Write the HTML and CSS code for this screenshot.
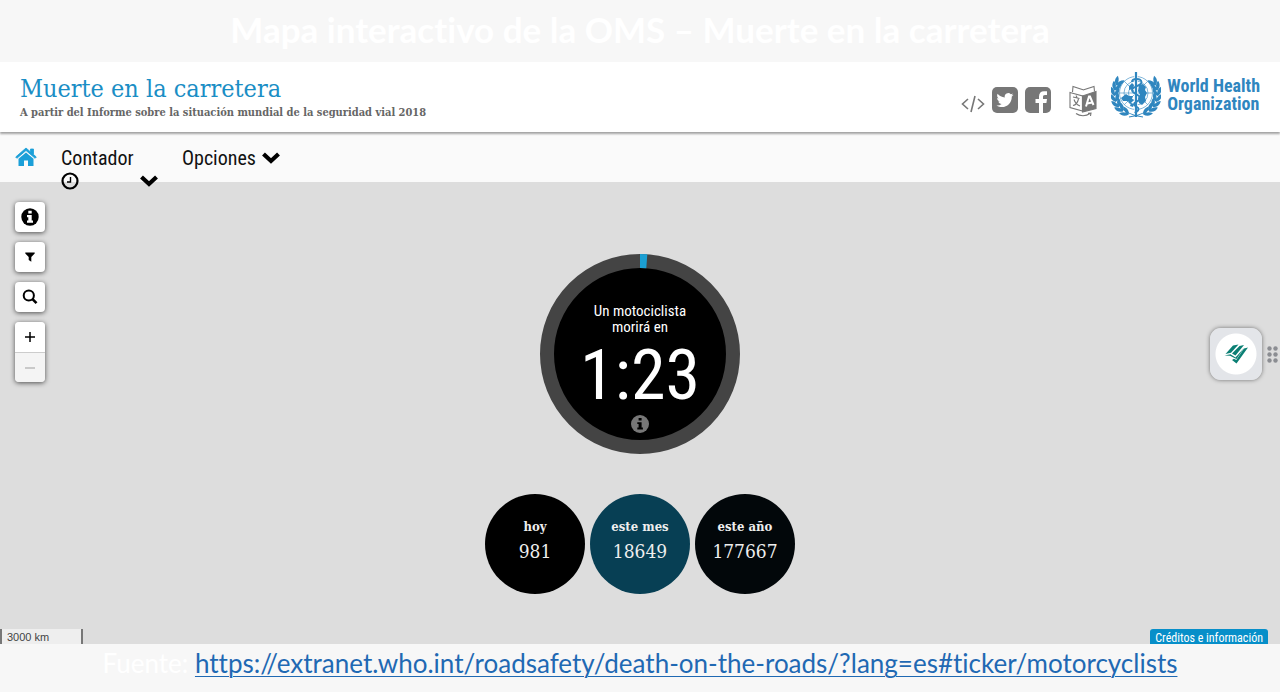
FILE: index.html
```
<!DOCTYPE html>
<html lang="es">
<head>
<meta charset="utf-8">
<title>Mapa interactivo de la OMS – Muerte en la carretera</title>
<link rel="stylesheet" href="styles.css">
</head>
<body>
  <h1 class="slide-title">Mapa interactivo de la OMS – Muerte en la carretera</h1>

  <header class="header">
    <div class="brand">
      <h2>Muerte en la carretera</h2>
      <p>A partir del Informe sobre la situación mundial de la seguridad vial 2018</p>
    </div>
    <div class="share">
      <a href="#embed" aria-label="Insertar">
        <svg width="24" height="20" viewBox="0 0 24 20" fill="none" stroke="#777" stroke-width="1.6"><path d="M7 5 1.500 10 7 15M17 5l5.500 5L17 15M14 2l-4 16"/></svg>
      </a>
      <a href="#twitter" aria-label="Twitter">
        <svg width="26" height="26" viewBox="0 0 26 26"><rect width="26" height="26" rx="5" fill="#777"/><path fill="#fff" d="M21.500 7.700c-.7.300-1.300.5-2 .6.700-.4 1.200-1.100 1.500-1.900-.7.400-1.400.7-2.200.8a3.500 3.500 0 0 0-6 3.200c-2.900-.1-5.500-1.500-7.200-3.600-.9 1.600-.5 3.600 1.100 4.600-.6 0-1.100-.2-1.600-.4 0 1.700 1.200 3.100 2.800 3.400-.5.200-1 .2-1.600.1.500 1.400 1.700 2.400 3.300 2.400A7 7 0 0 1 4.500 18.400c6.500 4.100 15.300.4 15.300-8.900.7-.5 1.300-1.100 1.700-1.800z"/></svg>
      </a>
      <a href="#facebook" aria-label="Facebook">
        <svg width="26" height="26" viewBox="0 0 26 26"><rect width="26" height="26" rx="5" fill="#777"/><path fill="#fff" d="M14 26V16h-3.500v-4H14V9.500C14 6 16 4.200 19 4.200h3V8h-2c-1.500 0-2 .7-2 1.900V12h4l-.6 4H18v10z"/></svg>
      </a>
      <a class="lang" href="#lang" aria-label="Idioma">
        <svg width="28" height="32" viewBox="0 0 28 32" fill="none" stroke="#777" stroke-width="1.100"><path d="M1 7.500 13.500 11v15L1 22.500zM3.500 7 4 1.500l10 3.300M14 5l11-3.500.5 5"/><path fill="#777" d="M13.500 11 27 6.500v17L13.500 27z"/><path d="m4 12 6.500 1.500M7 10.500l1 2M9.500 14c-1 4-3 6-5.500 6.500M5 14.500c1 3 3 5.500 6 6.500"/><path stroke="#fff" stroke-width="2" d="m17 21.500 3-10h1l3.500 8.500M18 18.500l5.500-1"/><path d="M7 28.500c4 3 10 3 14 0M21.500 31l.5-3-3 .2"/></svg>
      </a>
      <a class="who" href="#who">
        <svg width="50" height="48" viewBox="0 0 50 48" fill="none" stroke="#2f86bf">
          <defs>
            <path id="leaf" stroke="none" fill="#2f86bf" d="M46.500 27c-4-1.500-5.200-5-4.300-8.800 3 1.700 4.700 4.800 4.300 8.800zM46.300 27c-.8-3.600.6-7 3.900-9 1.200 3.500-.1 7-3.900 9z"/>
            <g id="branch">
              <use href="#leaf" transform="rotate(60 25 23)"/>
              <use href="#leaf" transform="rotate(43 25 23)"/>
              <use href="#leaf" transform="rotate(27 25 23)"/>
              <use href="#leaf" transform="rotate(11 25 23)"/>
              <use href="#leaf" transform="rotate(-5 25 23)"/>
              <use href="#leaf" transform="rotate(-20 25 23)"/>
              <use href="#leaf" transform="rotate(-34 25 23)"/>
              <path stroke-width="1.200" d="M18 46c10-1 19-5 25-13"/>
            </g>
          </defs>
          <use href="#branch"/>
          <use href="#branch" transform="matrix(-1 0 0 1 50 0)"/>
          <g stroke-width=".6">
            <circle cx="25" cy="22" r="16.500"/><circle cx="25" cy="22" r="12"/><circle cx="25" cy="22" r="7.500"/>
            <path d="M8.500 22h33M13.300 10.300l23.400 23.400M36.700 10.300 13.300 33.700"/>
          </g>
          <path stroke="none" fill="#2f86bf" d="M10 27l5-4 3 2 4 0-1 3 2 1-4 4-2-3-5 0zM28 14l4-1 3 3-1 3 2 3-2 4 1 4-4 4-3-2-1-5 2-3-2-4zM18 15l3-3 2 2-1 4-4 1zM20 32l3 1-1 3-3-1z"/>
          <path stroke="#fff" stroke-width="3.600" d="M25 3v40"/>
          <path stroke-width="2.200" d="M25 1v45"/>
          <path stroke-width="1.900" d="M21 11c0-4 9-4 9.500 0s-9.500 4-9.500 8 8 4 8 8-6 3-6 6 4.500 2 4.500 5-2.500 2-3.500 4"/>
        </svg>
        <span>World Health<br>Organization</span>
      </a>
    </div>
  </header>

  <nav class="nav">
    <a class="home" href="#home" aria-label="Inicio">
      <svg width="22" height="20" viewBox="0 0 22 20" fill="#1b9fd8"><path d="M11 5.500 3.500 11.800v7.200H9v-5.500h4V19h5.500v-7.200z"/><path stroke="#1b9fd8" stroke-width=".8" d="M11 1 .7 10l1.200 1.300L11 3.500l9.100 7.800 1.200-1.300L18.500 7.500V2h-3v2.900z"/></svg>
    </a>
    <button class="menu menu-counter" type="button">Contador
      <span class="menu-icons">
        <svg width="18" height="18" viewBox="0 0 18 18" fill="none" stroke="#000"><circle cx="9" cy="9" r="7.500" stroke-width="2.200"/><path d="M9.500 5v5H6" stroke-width="1.400"/></svg>
        <svg width="18" height="12" viewBox="0 0 18 12" fill="none" stroke="#000" stroke-width="4.200"><path d="m1.500 2 7.500 7 7.500-7"/></svg>
      </span>
    </button>
    <button class="menu" type="button">Opciones
      <svg width="18" height="12" viewBox="0 0 18 12" fill="none" stroke="#000" stroke-width="4.200"><path d="m1.500 2 7.500 7 7.500-7"/></svg>
    </button>
  </nav>

  <main class="map">
    <div class="controls">
      <button type="button" aria-label="Información">
        <svg width="18" height="18" viewBox="0 0 18 18"><circle cx="9" cy="9" r="8.700"/><path fill="#fff" d="M7.300 2.800h3.400v2.700H7.300zM6 7h4.700v5.500H12v2.300H6v-2.300h1.300V9.200H6z"/></svg>
      </button>
      <button type="button" aria-label="Filtrar">
        <svg width="10" height="10" viewBox="0 0 10 10"><path d="M.3.500h9.400v1L6.300 5v4.800L3.700 8V5L.3 1.500z"/></svg>
      </button>
      <button type="button" aria-label="Buscar">
        <svg width="16" height="16" viewBox="0 0 16 16" fill="none" stroke="#000"><circle cx="6.800" cy="6.500" r="5.100" stroke-width="2"/><path d="m10.500 10.200 4 4" stroke-width="2.600"/></svg>
      </button>
      <div class="zoom">
        <button type="button" aria-label="Acercar"><svg width="10" height="10" viewBox="0 0 10 10" stroke="#000" stroke-width="1.500"><path d="M0 5h10M5 0v10"/></svg></button>
        <button type="button" aria-label="Alejar" disabled><svg width="10" height="10" viewBox="0 0 10 10" stroke="#bbb" stroke-width="1.500"><path d="M0 5h10"/></svg></button>
      </div>
    </div>

    <section class="ticker">
      <div class="dial">
        <svg class="ring" viewBox="0 0 200 200"><circle cx="100" cy="100" r="93" fill="#000" stroke="#444" stroke-width="14"/><path fill="#1b9fd3" d="M100 0q3.600 0 7.300.3l-1 14q-3.100-.3-6.300-.3z"/></svg>
        <div class="dial-text">
          <p>Un motociclista<br>morirá en</p>
          <strong>1:23</strong>
          <svg width="18" height="18" viewBox="0 0 18 18" fill="#777"><circle cx="9" cy="9" r="9"/><path fill="#000" d="M7.600 3h3v2.600h-3zM6.300 7.200h4.300v5.300h1.300v1.900H6.300v-1.900h1.300V9.100H6.300z"/></svg>
        </div>
      </div>
      <ul class="totals">
        <li>hoy <b>981</b></li>
        <li class="month">este mes <b>18649</b></li>
        <li class="year">este año <b>177667</b></li>
      </ul>
    </section>

    <div class="widget">
      <button type="button" aria-label="Biblioteca">
        <svg width="24" height="20" viewBox="0 0 24 20" fill="#0b7f74"><path d="M9 1.500 14.500.5 7 8.800 1.500 10zM15.500 2 20 1l-8.500 10.500-3.500-2zM20 4.500l4-1L12.500 19.500 8 16l2-1.300 2.300 1.200zM.5 11.500l6-1.300 5 3.300L20 4l-7.500 11-6.500-3.300z"/></svg>
      </button>
      <svg width="11" height="17" viewBox="0 0 11 17" fill="#8b8d92"><circle cx="2.500" cy="2.500" r="2.200"/><circle cx="8.500" cy="2.500" r="2.200"/><circle cx="2.500" cy="8.500" r="2.200"/><circle cx="8.500" cy="8.500" r="2.200"/><circle cx="2.500" cy="14.500" r="2.200"/><circle cx="8.500" cy="14.500" r="2.200"/></svg>
    </div>

    <div class="scale">3000 km</div>
    <a class="credits" href="#credits">Créditos e información</a>
  </main>

  <footer class="source">
    <span>Fuente:</span>
    <a href="https://extranet.who.int/roadsafety/death-on-the-roads/?lang=es#ticker/motorcyclists">https://extranet.who.int/roadsafety/death-on-the-roads/?lang=es#ticker/motorcyclists</a>
  </footer>
</body>
</html>
```
FILE: styles.css
```
* {
  box-sizing: border-box;
  margin: 0;
  padding: 0;
}

body {
  display: flex;
  flex-direction: column;
  min-height: 100vh;
  background: #f7f7f7;
  font-family: "Roboto Condensed", "Liberation Sans Narrow", Roboto, sans-serif;
}

svg {
  display: block;
  flex: none;
}

button {
  border: 0;
  font: inherit;
  cursor: pointer;
}

.slide-title {
  padding: 8px 16px 12px;
  font: bold 35px/42px "Century Gothic", Lato, sans-serif;
  font-variant-ligatures: none;
  text-align: center;
  color: #fff;
}

/* header */
.header {
  position: relative;
  z-index: 2;
  display: flex;
  justify-content: space-between;
  height: 70px;
  padding: 8px 20px 0;
  background: #fff;
  box-shadow: 0 2px 2px rgba(0,0,0,0.35);
}

.brand {
  padding-top: 3px;
  font-family: "Roboto Slab", "DejaVu Serif Condensed", "DejaVu Serif", serif;
}

.brand h2 {
  font-size: 25px;
  font-weight: normal;
  line-height: 31px;
  color: #1a8ec5;
}

.brand p {
  font-size: 11px;
  font-weight: bold;
  line-height: 18px;
  color: #666;
}

.share {
  display: flex;
  align-items: flex-start;
  gap: 7px;
}

.share a {
  margin-top: 17px;
}

.share a:first-child {
  margin-top: 24px;
}

.share .lang {
  margin: 15px 7px 0 11px;
}

.share .who {
  display: flex;
  gap: 6px;
  margin: 1px 0 0;
  font: bold 18px/18px "Roboto Condensed", "Open Sans", sans-serif;
  color: #2f86bf;
  text-decoration: none;
}

.who span {
  padding-top: 6px;
}

/* navigation */
.nav {
  position: relative;
  z-index: 1;
  display: flex;
  align-items: flex-start;
  height: 50px;
  padding: 0 15px;
  background: #fafafa;
}

.home {
  margin: 15px 24px 0 0;
}

.menu {
  display: flex;
  align-items: center;
  gap: 6px;
  padding-top: 12px;
  background: none;
  font-size: 20px;
  line-height: 28px;
  color: #111;
}

.menu-counter {
  flex-direction: column;
  align-items: flex-start;
  gap: 0;
  width: 97px;
  margin-right: 24px;
}

.menu-icons {
  display: flex;
  align-items: center;
  justify-content: space-between;
  width: 100%;
}

/* map */
.map {
  position: relative;
  flex: 1;
  padding: 72px 0 50px;
  background: #ddd;
}

.controls {
  position: absolute;
  top: 20px;
  left: 15px;
  display: flex;
  flex-direction: column;
  gap: 10px;
}

.controls button {
  display: flex;
  align-items: center;
  justify-content: center;
  width: 30px;
  height: 30px;
  border-radius: 4px;
  background: #fff;
  box-shadow: 0 1px 5px rgba(0,0,0,0.65);
}

.controls .zoom {
  border-radius: 4px;
  box-shadow: 0 1px 5px rgba(0,0,0,0.65);
}

.controls .zoom button {
  border-radius: 4px 4px 0 0;
  box-shadow: none;
}

.controls .zoom button:disabled {
  border-top: 1px solid #ccc;
  border-radius: 0 0 4px 4px;
  background: #f4f4f4;
}

.ticker {
  display: flex;
  flex-direction: column;
  align-items: center;
  gap: 40px;
}

.dial {
  display: grid;
  width: 200px;
  height: 200px;
}

.ring,
.dial-text {
  grid-area: 1 / 1;
}

.dial-text {
  z-index: 1;
  display: flex;
  flex-direction: column;
  align-items: center;
  padding-top: 49px;
  font-size: 15px;
  line-height: 16px;
  text-align: center;
  color: #fff;
}

.dial-text strong {
  font-size: 70px;
  font-weight: normal;
  line-height: 80px;
}

.totals {
  display: flex;
  gap: 5px;
  list-style: none;
}

.totals li {
  width: 100px;
  height: 100px;
  padding-top: 23px;
  border-radius: 50%;
  background: #000;
  font: bold 13px/20px "Roboto Slab", "DejaVu Serif Condensed", "DejaVu Serif", serif;
  text-align: center;
  color: #eee;
}

.totals b {
  display: block;
  font-size: 19px;
  font-weight: normal;
  line-height: 28px;
}

.totals .month {
  background: #073f54;
}

.totals .year {
  background: #02070a;
}

/* floating widget on the right edge */
.widget {
  position: absolute;
  top: 146px;
  right: 2px;
  display: flex;
  align-items: center;
  gap: 5px;
}

.widget button {
  display: flex;
  align-items: center;
  justify-content: center;
  width: 52px;
  height: 52px;
  border: 5px solid #e3e5e9;
  border-radius: 11px;
  background: radial-gradient(circle, #fff 20px, #e3e5e9 21px);
  box-shadow: 0 0 4px rgba(0,0,0,0.5);
}

.scale {
  position: absolute;
  bottom: 0;
  left: 0;
  width: 83px;
  height: 15px;
  padding-left: 5px;
  border: 2px solid #777;
  border-width: 0 2px;
  background: #eee;
  font: 11px/17px "Liberation Sans", sans-serif;
  color: #444;
}

.credits {
  position: absolute;
  right: 12px;
  bottom: 0;
  height: 15px;
  padding: 0 5px;
  border-radius: 3px 3px 0 0;
  background: #078fc9;
  font-size: 12px;
  line-height: 19px;
  overflow: hidden;
  color: #fff;
  text-decoration: none;
}

.source {
  padding: 3px 0 13px;
  font: 26px/32px "Century Gothic", Lato, sans-serif;
  font-variant-ligatures: none;
  text-align: center;
  color: #fff;
}

.source a {
  color: #1f69b3;
  text-decoration-thickness: 1px;
  text-underline-offset: 3px;
}
```
